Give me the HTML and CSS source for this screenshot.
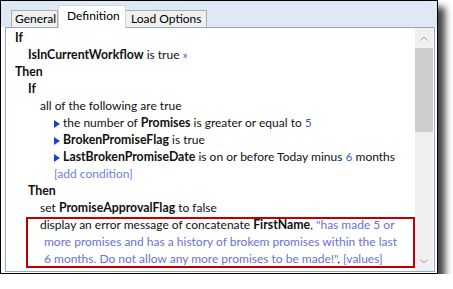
FILE: index.html
```html
<!DOCTYPE html>
<html>
<head>
<meta charset="utf-8">
<link rel="stylesheet" href="styles.css">
</head>
<body>
<div class="frame">
  <div class="tabstrip">
    <div class="tab t-general">General</div>
    <div class="tab active t-def">Definition</div>
    <div class="tab t-load">Load Options</div>
  </div>
  <div class="panel">
    <div class="content">
      <div class="ln i0 b">If</div>
      <div class="ln i1"><b>IsInCurrentWorkflow</b> is true <span class="num">»</span></div>
      <div class="ln i0 b">Then</div>
      <div class="ln i1 b">If</div>
      <div class="ln i2">all of the following are true</div>
      <div class="ln i3"><svg class="tri" width="6" height="8" viewBox="0 0 6 8"><path d="M0 0 L6 4 L0 8 Z"/></svg>the number of <b>Promises</b> is greater or equal to <span class="num">5</span></div>
      <div class="ln i3"><svg class="tri" width="6" height="8" viewBox="0 0 6 8"><path d="M0 0 L6 4 L0 8 Z"/></svg><b>BrokenPromiseFlag</b> is true</div>
      <div class="ln i3"><svg class="tri" width="6" height="8" viewBox="0 0 6 8"><path d="M0 0 L6 4 L0 8 Z"/></svg><b>LastBrokenPromiseDate</b> is on or before Today minus <span class="num">6</span> months</div>
      <div class="ln i3b link">[add condition]</div>
      <div class="ln i1 b">Then</div>
      <div class="ln i2">set <b>PromiseApprovalFlag</b> to false</div>
      <div class="hl">
        <div class="hl-in">
          <div class="ln hl1">display an error message of concatenate <b>FirstName</b>, <span class="str">"has made 5 or</span></div>
          <div class="ln hl2 str">more promises and has a history of brokem promises within the last</div>
          <div class="ln hl2"><span class="str">6 months. Do not allow any more promises to be made!"</span>, <span class="str">[values]</span></div>
        </div>
      </div>
    </div>
    <div class="scrollbar">
      <div class="arrow"><svg width="8" height="5" viewBox="0 0 8 5"><path d="M0.5 4.5 L4 1 L7.5 4.5" fill="none" stroke="#9a9a9a" stroke-width="1"/></svg></div>
      <div class="thumb"></div>
      <div class="track"></div>
      <div class="arrow"><svg width="8" height="5" viewBox="0 0 8 5"><path d="M0.5 0.5 L4 4 L7.5 0.5" fill="none" stroke="#9a9a9a" stroke-width="1"/></svg></div>
    </div>
  </div>
</div>
</body>
</html>
```

FILE: styles.css
```css
html, body {
  margin: 0;
  padding: 0;
  background: #fff;
}
body {
  font-family: "Lato", "Open Sans", sans-serif;
  font-size: 12px;
  color: #111;
}
.frame {
  width: 436px;
  height: 272px;
  border: 1px solid #000;
  background: #fff;
  box-shadow: 7px 7px 7px rgba(0, 0, 0, 0.75);
  display: flex;
  flex-direction: column;
}
.tabstrip {
  height: 26px;
  background: #dfe9f5;
  display: flex;
  align-items: flex-end;
  padding-left: 10px;
}
.tab {
  box-sizing: border-box;
  height: 17px;
  line-height: 15px;
  border: 1px solid #acacac;
  border-bottom: none;
  background: #f0f0f0;
  color: #000;
  white-space: nowrap;
  font-size: 12px;
}
.t-general { width: 47px; padding-left: 3px; }
.t-load { width: 81px; padding-left: 5px; border-left: none; }
.tab.active {
  width: 68px;
  padding-left: 8px;
  background: #fff;
  border-color: #d6d6d6;
  height: 23px;
  line-height: 19px;
  margin-bottom: -1px;
  position: relative;
  z-index: 1;
}
.panel {
  flex: 1;
  margin: 0 2px 1px 4px;
  border: 1px solid #8fa8cc;
  display: flex;
  background: #fff;
}
.content {
  flex: 1;
  padding: 1px 0 0 0;
  overflow: hidden;
}
.ln {
  height: 17px;
  line-height: 17px;
  white-space: nowrap;
}
.ln b, .b {
  font-weight: 700;
  font-size: 12.3px;
}
.i0 { padding-left: 9px; }
.i1 { padding-left: 22px; }
.i2 { padding-left: 34px; }
.i3 { padding-left: 48px; }
.i3b { padding-left: 48px; }
.tri {
  fill: #1e3fc8;
  margin-right: 3px;
  vertical-align: -0.5px;
}
.num { color: #3b5fd9; }
.link { color: #6c7fe0; }
.str { color: #6b70d8; }
.hl {
  margin: 1px 0 0 20px;
  width: 385px;
  height: 47px;
  border: 2px solid #c00000;
}
.hl-in {
  margin-top: -3px;
}
.hl1 { padding-left: 12px; }
.hl2 { padding-left: 16px; }
.scrollbar {
  width: 18px;
  margin-right: 1px;
  background: #f0f0f0;
  display: flex;
  flex-direction: column;
}
.arrow {
  height: 20px;
  display: flex;
  align-items: center;
  justify-content: center;
}
.thumb {
  height: 84px;
  background: #cdcdcd;
}
.track {
  flex: 1;
}
```
